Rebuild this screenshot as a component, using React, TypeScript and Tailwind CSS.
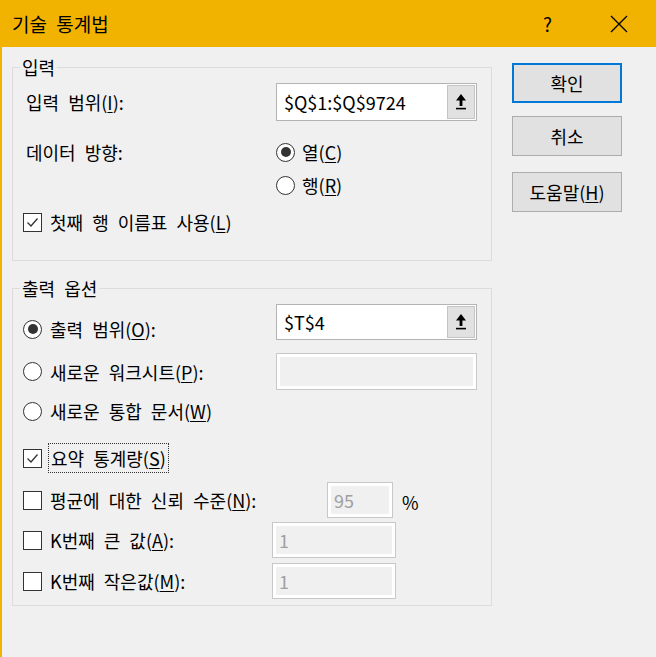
import React from 'react';

const Key: React.FC<{ k: string }> = ({ k }) => <span className="underline underline-offset-2">{k}</span>;

const Radio: React.FC<{ checked?: boolean }> = ({ checked }) => (
  <span className="w-[19px] h-[19px] rounded-full border border-[#333] bg-white flex items-center justify-center shrink-0">
    {checked && <span className="w-[10px] h-[10px] rounded-full bg-[#333]" />}
  </span>
);

const Check: React.FC<{ checked?: boolean }> = ({ checked }) => (
  <span className="w-[19px] h-[19px] border border-[#333] bg-white flex items-center justify-center shrink-0">
    {checked && (
      <svg width="15" height="15" viewBox="0 0 15 15" fill="none" stroke="#333" strokeWidth={1.3}>
        <path d="M2.5 7.5 L6 11 L12.5 3.5" />
      </svg>
    )}
  </span>
);

const RefButton = () => (
  <span className="w-[28px] h-full bg-[#e1e1e1] border border-[#c4c4c4] flex items-center justify-center">
    <svg width="12" height="18" viewBox="0 0 12 18" fill="#000">
      <path d="M6 1 L11 7.5 L7.4 7.5 L7.4 13 L4.6 13 L4.6 7.5 L1 7.5 Z" />
      <rect x="1" y="14.8" width="10" height="1.6" />
    </svg>
  </span>
);

const RangeInput: React.FC<{ value: string; h: string }> = ({ value, h }) => (
  <div className={`w-[201px] ${h} bg-white border border-[#b4b4b4] flex items-stretch p-[1px]`}>
    <span className="flex-1 pl-[6px] flex items-center">{value}</span>
    <RefButton />
  </div>
);

const DisabledInput: React.FC<{ value?: string; w: string }> = ({ value, w }) => (
  <div className={`${w} h-[36px] bg-white border border-[#c8c8c8] p-[3px]`}>
    <div className="h-full bg-[#f0f0f0] pl-[3px] flex items-center text-[#a0a0a0]">{value}</div>
  </div>
);

const Btn: React.FC<{ children: React.ReactNode; focused?: boolean }> = ({ children, focused }) => (
  <button
    className={`w-[110px] h-[40px] bg-[#e1e1e1] flex items-center justify-center ${
      focused ? 'border-2 border-[#0078d7]' : 'border border-[#adadad]'
    }`}
  >
    {children}
  </button>
);

export default function App() {
  return (
    <div className="w-[656px] h-[657px] bg-[#f0f0f0] flex flex-col font-['Noto_Sans_CJK_KR',sans-serif] text-[18px] leading-[22px] [word-spacing:5px] text-black">
      <div className="h-[47px] bg-[#f2b200] flex items-center pl-[12px] shrink-0">
        <span className="text-[19px]">기술 통계법</span>
        <span className="ml-auto text-[19px]">?</span>
        <svg className="ml-[58px] mr-[28px]" width="18" height="18" viewBox="0 0 18 18" stroke="#000" strokeWidth={1.3}>
          <path d="M1 1 L17 17 M17 1 L1 17" />
        </svg>
      </div>

      <div className="flex-1 flex border-l-2 border-[#f2b200]">
        <div className="ml-[10px] w-[480px] pt-[9px]">
          <fieldset className="border border-[#dcdcdc] pl-[10px] pb-[23px]">
            <legend className="ml-[-3px] px-[2px]">입력</legend>
            <div className="mt-[5px] h-[38px] flex items-center">
              <span className="w-[253px] pl-[3px]">
                입력 범위(<Key k="I" />):
              </span>
              <RangeInput value="$Q$1:$Q$9724" h="h-[38px]" />
            </div>
            <div className="mt-[16px] h-[30px] flex items-center">
              <span className="w-[253px] pl-[3px]">데이터 방향:</span>
              <Radio checked />
              <span className="ml-[7px]">
                열(<Key k="C" />)
              </span>
            </div>
            <div className="mt-[3px] h-[30px] flex items-center pl-[253px]">
              <Radio />
              <span className="ml-[7px]">
                행(<Key k="R" />)
              </span>
            </div>
            <div className="mt-[7px] h-[30px] flex items-center">
              <Check checked />
              <span className="ml-[8px]">
                첫째 행 이름표 사용(<Key k="L" />)
              </span>
            </div>
          </fieldset>

          <fieldset className="mt-[16px] border border-[#dcdcdc] pl-[10px] pb-[6px]">
            <legend className="ml-[-3px] px-[2px]">출력 옵션</legend>
            <div className="mt-[5px] h-[36px] flex items-start">
              <div className="w-[253px] h-full flex items-center pt-[14px]">
                <Radio checked />
                <span className="ml-[8px]">
                  출력 범위(<Key k="O" />):
                </span>
              </div>
              <RangeInput value="$T$4" h="h-[36px]" />
            </div>
            <div className="mt-[13px] h-[37px] flex items-center">
              <div className="w-[253px] flex items-center">
                <Radio />
                <span className="ml-[8px]">
                  새로운 워크시트(<Key k="P" />):
                </span>
              </div>
              <div className="w-[201px] h-[37px] bg-white border border-[#c8c8c8] p-[3px]">
                <div className="h-full bg-[#f0f0f0]" />
              </div>
            </div>
            <div className="mt-[6px] h-[30px] flex items-center">
              <Radio />
              <span className="ml-[8px]">
                새로운 통합 문서(<Key k="W" />)
              </span>
            </div>
            <div className="mt-[17px] h-[30px] flex items-center">
              <Check checked />
              <span className="ml-[6px] h-[30px] px-[2px] flex items-center border border-dotted border-[#333]">
                요약 통계량(<Key k="S" />)
              </span>
            </div>
            <div className="mt-[9px] h-[36px] flex items-center">
              <div className="w-[304px] flex items-center">
                <Check />
                <span className="ml-[8px]">
                  평균에 대한 신뢰 수준(<Key k="N" />):
                </span>
              </div>
              <DisabledInput value="95" w="w-[66px]" />
              <span className="ml-[9px] mt-[4px]">%</span>
            </div>
            <div className="mt-[4px] h-[36px] flex items-center">
              <div className="w-[249px] flex items-center">
                <Check />
                <span className="ml-[8px]">
                  K번째 큰 값(<Key k="A" />):
                </span>
              </div>
              <DisabledInput value="1" w="w-[124px]" />
            </div>
            <div className="mt-[5px] h-[36px] flex items-center">
              <div className="w-[249px] flex items-center">
                <Check />
                <span className="ml-[8px]">
                  K번째 작은값(<Key k="M" />):
                </span>
              </div>
              <DisabledInput value="1" w="w-[124px]" />
            </div>
          </fieldset>
        </div>

        <div className="ml-[20px] pt-[16px] flex flex-col">
          <Btn focused>확인</Btn>
          <div className="mt-[13px]">
            <Btn>취소</Btn>
          </div>
          <div className="mt-[16px]">
            <Btn>
              도움말(<Key k="H" />)
            </Btn>
          </div>
        </div>
      </div>
    </div>
  );
}
